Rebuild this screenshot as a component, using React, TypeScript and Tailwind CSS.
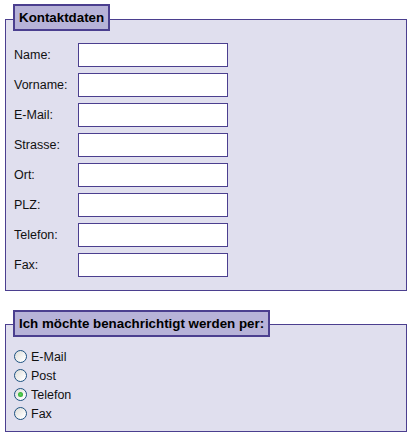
import React from "react";

const fields = ["Name:", "Vorname:", "E-Mail:", "Strasse:", "Ort:", "PLZ:", "Telefon:", "Fax:"];
const options = ["E-Mail", "Post", "Telefon", "Fax"];

function Radio({ checked }: { checked?: boolean }) {
  return (
    <span className="relative flex h-[13px] w-[13px] shrink-0 items-center justify-center rounded-full border border-[#1c5180] bg-[linear-gradient(135deg,#dcdcd7_0%,#ffffff_85%)]">
      {checked && (
        <span className="h-[5px] w-[5px] rounded-full bg-[radial-gradient(circle,#5fd35f_0%,#21a121_100%)]" />
      )}
    </span>
  );
}

export default function App() {
  return (
    <div
      className="flex w-[411px] flex-col bg-white px-[5px] pt-[4px] text-black"
      style={{ fontFamily: '"Liberation Sans", Arial, sans-serif' }}
    >
      <div className="flex flex-col">
        <div className="relative z-10 -mb-[12px] ml-[8px] self-start border-2 border-[#4b3f8f] bg-[#b7b3d8] px-[4px] py-[4px] text-[13.33px] font-bold leading-[15px]">
          Kontaktdaten
        </div>
        <div className="w-[402px] border border-[#4b3f8f] bg-[#e0dfee] pb-[13px] pl-[8px] pt-[23px]">
          <div className="flex flex-col gap-[6px]">
            {fields.map((f) => (
              <div key={f} className="flex h-[24px] items-center">
                <span className="w-[64px] text-[12.5px] text-[#111]">{f}</span>
                <input className="h-[24px] w-[150px] border border-[#4b3f8f] bg-white outline-none" />
              </div>
            ))}
          </div>
        </div>
      </div>

      <div className="mt-[19px] flex flex-col">
        <div className="relative z-10 -mb-[13px] ml-[8px] self-start border-2 border-[#4b3f8f] bg-[#b7b3d8] px-[4px] py-[4px] text-[13.33px] font-bold leading-[15px]">
          Ich möchte benachrichtigt werden per:
        </div>
        <div className="w-[402px] border border-[#4b3f8f] bg-[#e0dfee] pb-[8px] pl-[8px] pt-[22px]">
          <div className="flex flex-col">
            {options.map((o) => (
              <div key={o} className="flex h-[19px] items-center gap-[4px]">
                <Radio checked={o === "Telefon"} />
                <span className="text-[12.5px] leading-[14px] text-[#111]">{o}</span>
              </div>
            ))}
          </div>
        </div>
      </div>
    </div>
  );
}
